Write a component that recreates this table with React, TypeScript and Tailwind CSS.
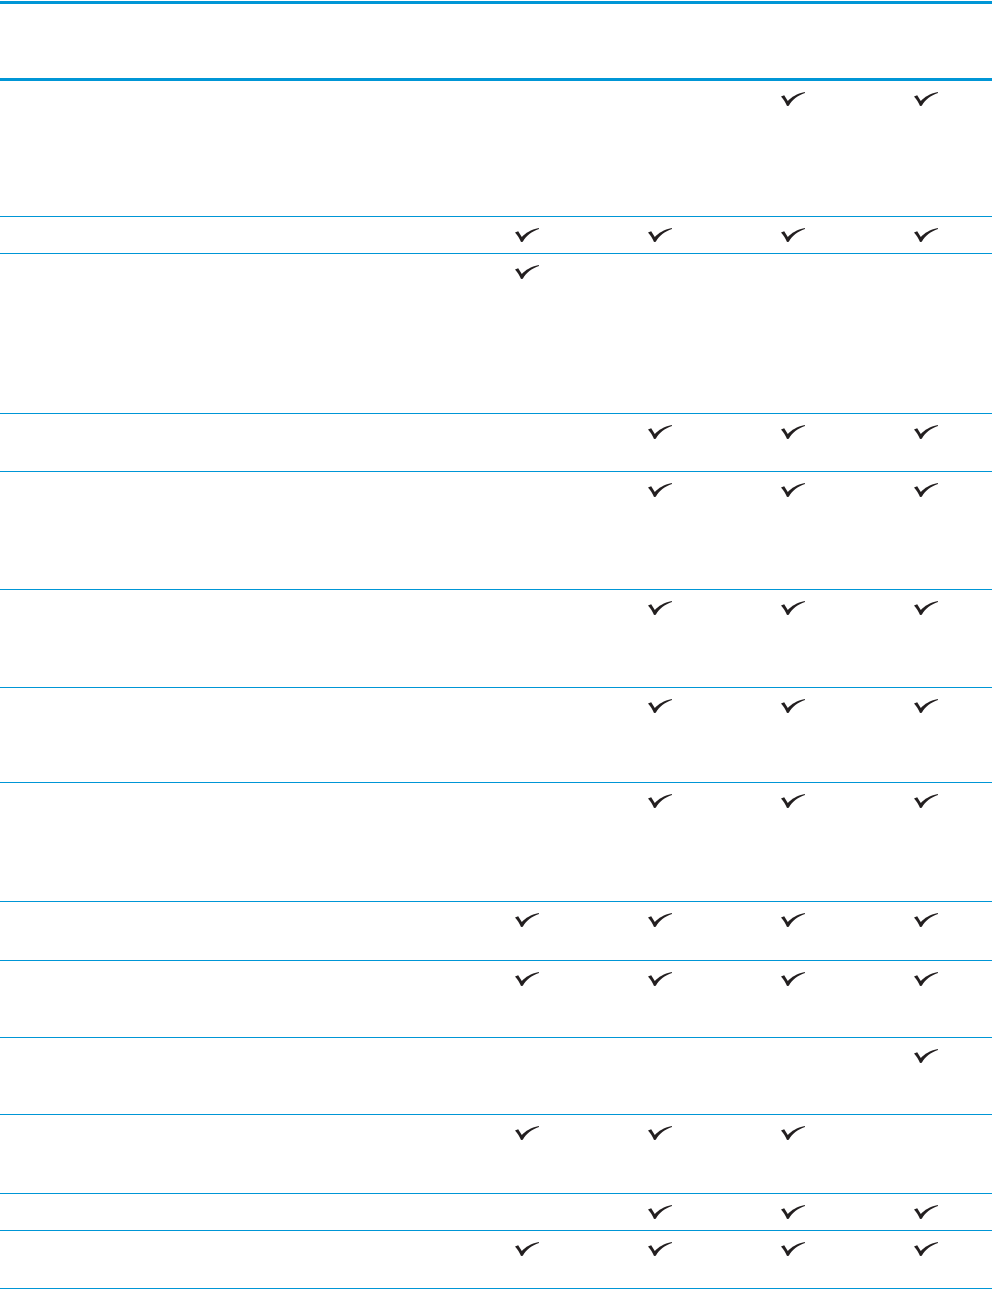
import React from "react";

const Check = () => (
  <svg width="24" height="14" viewBox="0 0 24 14" className="block">
    <path
      d="M0 4.4 L3.2 3.2 L6.8 9 C10.6 5 15.6 1.8 23.8 0 L24 1 C16.6 3.4 11.2 7.8 7.8 13.8 L6 14 C4.6 10.6 2.6 7.2 0 4.4 Z"
      fill="#231f20"
    />
  </svg>
);

const rows: { h: string; c: boolean[] }[] = [
  { h: "h-[136px]", c: [false, false, true, true] },
  { h: "h-[37px]", c: [true, true, true, true] },
  { h: "h-[160px]", c: [true, false, false, false] },
  { h: "h-[58px]", c: [false, true, true, true] },
  { h: "h-[118px]", c: [false, true, true, true] },
  { h: "h-[98px]", c: [false, true, true, true] },
  { h: "h-[95px]", c: [false, true, true, true] },
  { h: "h-[119px]", c: [false, true, true, true] },
  { h: "h-[59px]", c: [true, true, true, true] },
  { h: "h-[77px]", c: [true, true, true, true] },
  { h: "h-[77px]", c: [false, false, false, true] },
  { h: "h-[79px]", c: [true, true, true, false] },
  { h: "h-[37px]", c: [false, true, true, true] },
  { h: "h-[58px]", c: [true, true, true, true] },
];

export default function App() {
  return (
    <div className="w-[992px] h-[1289px] bg-white" style={{ fontFamily: "'Liberation Sans', Arial, sans-serif" }}>
      <div className="mt-px h-[80px] border-y-[3px] border-[#0096d6]" />
      {rows.map((r, i) => (
        <div
          key={i}
          className={`${r.h} border-b border-[#0096d6] grid grid-cols-[460px_133px_133px_133px_133px]`}
        >
          <div />
          {r.c.map((on, j) => (
            <div key={j} className="flex justify-center pt-[11px]">
              {on ? <Check /> : null}
            </div>
          ))}
        </div>
      ))}
    </div>
  );
}
